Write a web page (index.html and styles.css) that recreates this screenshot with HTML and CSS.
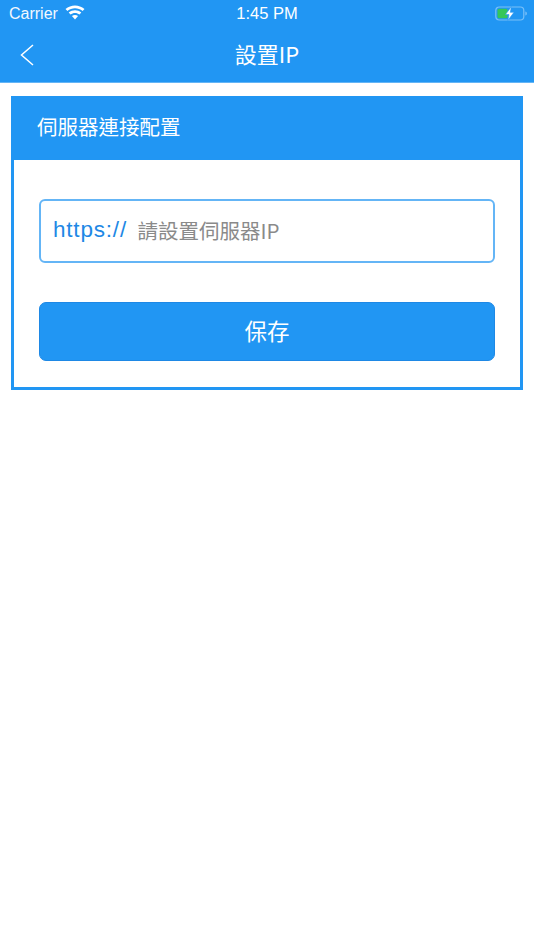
FILE: index.html
```html
<!DOCTYPE html>
<html lang="zh-Hant">
<head>
    <meta charset="UTF-8">
    <meta name="viewport" content="width=device-width, initial-scale=1.0">
    <title>設置IP</title>
    <link rel="stylesheet" href="styles.css">
</head>
<body>
    <header class="top-bar">
        <div class="status-bar">
            <div class="status-left">
                <span>Carrier</span>
                <svg class="wifi" width="20" height="15" viewBox="0 0 20 15">
                    <path d="M10 14.6 L6.9 11.1 C8.6 9.6 11.4 9.6 13.1 11.1 Z" fill="#fff"/>
                    <path d="M5.5 9.5 L3.7 7.5 C7.2 4.4 12.8 4.4 16.3 7.5 L14.5 9.5 C11.9 7.4 8.1 7.4 5.5 9.5 Z" fill="#fff"/>
                    <path d="M2.4 6 L0.5 3.9 C5.9 -0.8 14.1 -0.8 19.5 3.9 L17.6 6 C13.2 2.3 6.8 2.3 2.4 6 Z" fill="#fff"/>
                </svg>
            </div>
            <div class="status-time">1:45 PM</div>
            <svg class="battery" width="33" height="15" viewBox="0 0 33 15">
                <rect x="0.8" y="1" width="28" height="13" rx="3.5" fill="none" stroke="#fff" stroke-opacity="0.4" stroke-width="1.2"/>
                <rect x="2.5" y="2.7" width="10" height="9.6" rx="1.5" fill="#35c759"/>
                <path d="M30.3 5.4 C31.4 5.7 31.9 6.4 31.9 7.5 C31.9 8.6 31.4 9.3 30.3 9.6 Z" fill="#fff" fill-opacity="0.4"/>
                <path d="M16.4 0.6 L10.4 8.6 L14 8.6 L12.9 14.4 L19 6.3 L15.3 6.3 Z" fill="#fff" stroke="#2196f3" stroke-width="0.6"/>
            </svg>
        </div>
        <div class="nav-bar">
            <svg class="back" width="16" height="24" viewBox="0 0 16 24">
                <path d="M14 2 L2.5 12 L14 22" fill="none" stroke="#fff" stroke-width="1.5"/>
            </svg>
            <h1>設置IP</h1>
        </div>
    </header>

    <section class="card">
        <div class="card-title">伺服器連接配置</div>
        <div class="card-body">
            <div class="ip-field">
                <span class="prefix">https://</span>
                <span class="placeholder">請設置伺服器IP</span>
            </div>
            <button class="save-button">保存</button>
        </div>
    </section>
</body>
</html>
```

FILE: styles.css
```css
body {
    margin: 0;
    padding: 0;
    background: #fff;
    font-family: "Noto Sans CJK TC", "Liberation Sans", sans-serif;
}

.top-bar {
    height: 82px;
    background: #2196f3;
    color: #fff;
    border-bottom: 1px solid #64b5f6;
}

.status-bar {
    position: relative;
    display: flex;
    justify-content: space-between;
    align-items: center;
    height: 27px;
    padding: 0 3px 0 9px;
    font-family: "Liberation Sans", sans-serif;
    font-size: 16px;
}

.status-left {
    display: flex;
    align-items: center;
    gap: 7px;
    color: #f2f8fe;
}

.wifi {
    margin-top: -3px;
}

.status-time {
    position: absolute;
    left: 0;
    right: 0;
    font-size: 16.5px;
    text-align: center;
}

.battery {
    position: relative;
    margin-right: 3px;
}

.nav-bar {
    position: relative;
    display: flex;
    justify-content: center;
    align-items: center;
    height: 55px;
}

.back {
    position: absolute;
    left: 19px;
    top: 16px;
}

h1 {
    margin: 0 0 3px;
    font-size: 22px;
    font-weight: 400;
    line-height: 52px;
}

.card {
    margin: 13px 11px 0;
    border: 3px solid #2196f3;
    border-top-width: 0;
}

.card-title {
    height: 64px;
    margin: 0 -1px;
    padding-left: 24px;
    background: #2196f3;
    color: #fff;
    font-size: 20.5px;
    line-height: 60px;
}

.card-body {
    display: flex;
    flex-direction: column;
    gap: 39px;
    padding: 39px 25px 26px;
}

.ip-field {
    display: flex;
    align-items: center;
    height: 64px;
    box-sizing: border-box;
    padding: 0 0 2px 12px;
    border: 2px solid #64b5f6;
    border-radius: 6px;
    font-size: 20.5px;
}

.prefix {
    font-family: "Liberation Sans", sans-serif;
    color: #1e88e5;
    font-size: 22.5px;
    letter-spacing: 0.8px;
}

.placeholder {
    margin-left: 10.5px;
    color: #8a8a8a;
}

.save-button {
    height: 59px;
    padding: 0 0 3px;
    background: #2196f3;
    border: 1px solid #1e88e5;
    border-radius: 7px;
    color: #fff;
    font-family: inherit;
    font-size: 22.5px;
}
```
